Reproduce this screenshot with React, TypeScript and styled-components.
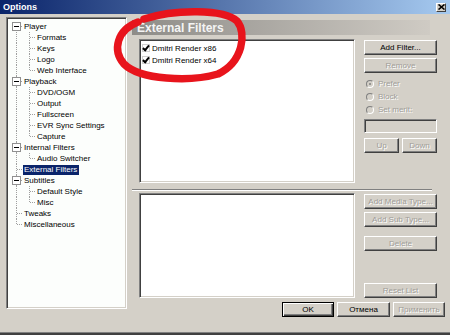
import styled, { createGlobalStyle, css } from 'styled-components';

const GlobalStyle = createGlobalStyle`
  html, body { margin: 0; padding: 0; background: #d4d0c8; }
  body { font-family: "Liberation Sans", Arial, sans-serif; font-size: 8px; color: #000; }
`;

type Node = { label: string; children?: string[]; selected?: boolean };

const tree: Node[] = [
  { label: 'Player', children: ['Formats', 'Keys', 'Logo', 'Web Interface'] },
  { label: 'Playback', children: ['DVD/OGM', 'Output', 'Fullscreen', 'EVR Sync Settings', 'Capture'] },
  { label: 'Internal Filters', children: ['Audio Switcher'] },
  { label: 'External Filters', selected: true },
  { label: 'Subtitles', children: ['Default Style', 'Misc'] },
  { label: 'Tweaks' },
  { label: 'Miscellaneous' },
];

const sunken = css`
  box-sizing: border-box;
  border: 1px solid;
  border-color: #808080 #ffffff #ffffff #808080;
  box-shadow: inset 1px 1px 0 #404040, inset -1px -1px 0 #d4d0c8;
`;

const disabledText = css`
  color: #a09d98;
  text-shadow: 1px 1px 0 #ffffff;
`;

export default function App() {
  return (
    <>
      <GlobalStyle />
      <Window>
        <TitleBar>
          <Title>Options</Title>
          <CloseButton>
            <svg width="7" height="6" viewBox="0 0 7 6">
              <path d="M0.5 0.5 L6.5 5.5 M6.5 0.5 L0.5 5.5" stroke="#000" strokeWidth="1.6" />
            </svg>
          </CloseButton>
        </TitleBar>

        <Body>
          <TreePanel>
            {tree.map((node, i) => {
              const first = i === 0;
              const lastRoot = i === tree.length - 1;
              return (
                <div key={node.label}>
                  <TreeRow>
                    <Cell $vert={first ? 'lower' : lastRoot ? 'upper' : 'full'} $horiz>
                      {node.children && <Expander />}
                    </Cell>
                    <Label $selected={node.selected}>{node.label}</Label>
                  </TreeRow>
                  {node.children?.map((child, j) => (
                    <TreeRow key={child}>
                      <Cell $vert={lastRoot ? 'none' : 'full'} />
                      <Cell $vert={j === node.children!.length - 1 ? 'upper' : 'full'} $horiz />
                      <Label>{child}</Label>
                    </TreeRow>
                  ))}
                </div>
              );
            })}
          </TreePanel>

          <RightPane>
            <Header>External Filters</Header>

            <Section $top={4}>
              <ListBox $height={144}>
                <CheckRow>
                  <CheckBox />
                  Dmitri Render x86
                </CheckRow>
                <CheckRow>
                  <CheckBox />
                  Dmitri Render x64
                </CheckRow>
              </ListBox>
              <ButtonColumn>
                <Button>Add Filter...</Button>
                <Button disabled>Remove</Button>
                <RadioGroup>
                  <RadioRow>
                    <Radio $checked />
                    Prefer
                  </RadioRow>
                  <RadioRow>
                    <Radio />
                    Block
                  </RadioRow>
                  <RadioRow>
                    <Radio />
                    Set merit:
                  </RadioRow>
                </RadioGroup>
                <EditBox />
                <ButtonPair>
                  <Button disabled $width={35}>Up</Button>
                  <Button disabled $width={35}>Down</Button>
                </ButtonPair>
              </ButtonColumn>
            </Section>

            <Separator />

            <Section $top={2}>
              <ListBox $height={105} />
              <ButtonColumn>
                <Button disabled>Add Media Type...</Button>
                <Button disabled>Add Sub Type...</Button>
                <Button disabled $gap={9}>Delete</Button>
                <Button disabled $push>Reset List</Button>
              </ButtonColumn>
            </Section>

            <Footer>
              <Button $default $width={52}>OK</Button>
              <Button $width={53}>Отмена</Button>
              <Button disabled $width={52}>Применить</Button>
            </Footer>
          </RightPane>
        </Body>

        <Scribble width="450" height="335" viewBox="0 0 450 335">
          <path
            d="M144 19 C175 9, 224 9, 237 21 C247 33, 243 62, 218 74 C190 82, 140 80, 124 64 C112 50, 117 30, 138 22"
            fill="none"
            stroke="#e8141c"
            strokeWidth="7.5"
            strokeLinecap="round"
          />
        </Scribble>
      </Window>
    </>
  );
}

const Window = styled.div`
  position: relative;
  box-sizing: border-box;
  width: 450px;
  height: 335px;
  display: flex;
  flex-direction: column;
  background: #d4d0c8;
  border-bottom: 2px solid;
  border-bottom-color: #404040;
  box-shadow: inset 0 -1px 0 #808080;
  overflow: hidden;
`;

const TitleBar = styled.div`
  height: 14px;
  flex-shrink: 0;
  display: flex;
  align-items: center;
  justify-content: space-between;
  padding: 0 4px 0 3px;
  background: linear-gradient(to right, #0a246a, #a6caf0);
`;

const Title = styled.span`
  color: #ffffff;
  font-weight: bold;
  font-size: 9px;
`;

const CloseButton = styled.span`
  box-sizing: border-box;
  width: 10px;
  height: 9px;
  display: flex;
  align-items: center;
  justify-content: center;
  background: #d4d0c8;
  border: 1px solid;
  border-color: #ffffff #404040 #404040 #ffffff;
`;

const Body = styled.div`
  flex: 1;
  display: flex;
  padding: 3px 5px 0 6px;
`;

const TreePanel = styled.div`
  ${sunken};
  width: 121px;
  height: 292px;
  flex-shrink: 0;
  background: #fcfefc;
  padding: 3px 0 0 3px;
`;

const TreeRow = styled.div`
  display: flex;
  align-items: center;
  height: 11px;
`;

const dotsV = 'linear-gradient(to bottom, #a0a0a0 50%, transparent 50%)';

const Cell = styled.span<{ $vert?: 'full' | 'upper' | 'lower' | 'none'; $horiz?: boolean }>`
  position: relative;
  width: 13px;
  height: 11px;
  flex-shrink: 0;
  &::before {
    content: '';
    position: absolute;
    left: 6px;
    width: 1px;
    display: ${(p) => (p.$vert === 'none' || !p.$vert ? 'none' : 'block')};
    top: ${(p) => (p.$vert === 'lower' ? '5px' : '0')};
    height: ${(p) => (p.$vert === 'full' ? '11px' : '6px')};
    background-image: ${dotsV};
    background-size: 1px 2px;
  }
  &::after {
    content: '';
    position: absolute;
    display: ${(p) => (p.$horiz ? 'block' : 'none')};
    left: 7px;
    top: 5px;
    width: 6px;
    height: 1px;
    background-image: linear-gradient(to right, #a0a0a0 50%, transparent 50%);
    background-size: 2px 1px;
  }
`;

const Expander = styled.span`
  position: absolute;
  z-index: 1;
  box-sizing: border-box;
  left: 2px;
  top: 1px;
  width: 9px;
  height: 9px;
  border: 1px solid #909090;
  background: #ffffff;
  &::after {
    content: '';
    position: absolute;
    left: 1px;
    top: 3px;
    width: 5px;
    height: 1px;
    background: #000;
  }
`;

const Label = styled.span<{ $selected?: boolean }>`
  padding: 0 2px 0 1px;
  line-height: 10px;
  white-space: nowrap;
  ${(p) =>
    p.$selected &&
    css`
      background: #0a246a;
      color: #ffffff;
    `}
`;

const RightPane = styled.div`
  flex: 1;
  display: flex;
  flex-direction: column;
  margin-left: 5px;
  padding-top: 3px;
`;

const Header = styled.div`
  box-sizing: border-box;
  width: 298px;
  height: 15px;
  padding-left: 5px;
  display: flex;
  align-items: center;
  background: linear-gradient(to right, #8e8c88, #cfcbc4);
  color: #f4f4f4;
  font-size: 12px;
  font-weight: bold;
`;

const Section = styled.div<{ $top: number }>`
  display: flex;
  margin-top: ${(p) => p.$top}px;
  padding-left: 7px;
`;

const ListBox = styled.div<{ $height: number }>`
  ${sunken};
  width: 216px;
  height: ${(p) => p.$height}px;
  background: #ffffff;
  padding: 2px 0 0 2px;
`;

const CheckRow = styled.div`
  display: flex;
  align-items: center;
  gap: 2px;
  height: 12px;
  font-size: 8px;
`;

const CheckBox = styled.span`
  position: relative;
  box-sizing: border-box;
  width: 8px;
  height: 8px;
  background: #ffffff;
  border: 1px solid #d0d0d0;
  &::after {
    content: '';
    position: absolute;
    left: 1px;
    top: -1px;
    width: 2px;
    height: 5px;
    border: solid #000;
    border-width: 0 2px 2px 0;
    transform: rotate(40deg);
  }
`;

const ButtonColumn = styled.div`
  display: flex;
  flex-direction: column;
  gap: 3px;
  margin-left: 9px;
  padding-top: 1px;
  width: 73px;
`;

const Button = styled.button<{ $width?: number; $default?: boolean; $gap?: number; $push?: boolean }>`
  box-sizing: border-box;
  width: ${(p) => p.$width ?? 73}px;
  height: 15px;
  flex-shrink: 0;
  padding: 0;
  font-family: inherit;
  font-size: 8px;
  color: #000;
  background: #d4d0c8;
  border: 1px solid;
  border-color: #ffffff #404040 #404040 #ffffff;
  box-shadow: inset -1px -1px 0 #808080;
  ${(p) => p.$gap && css`margin-top: ${p.$gap - 3}px;`}
  ${(p) => p.$push && css`margin-top: auto;`}
  &:disabled {
    ${disabledText};
  }
  ${(p) =>
    p.$default &&
    css`
      border: 1px solid #000;
      box-shadow: inset 1px 1px 0 #ffffff, inset -1px -1px 0 #404040, inset -2px -2px 0 #808080;
    `}
`;

const RadioGroup = styled.div`
  display: flex;
  flex-direction: column;
  margin-top: 1px;
`;

const RadioRow = styled.div`
  display: flex;
  align-items: center;
  gap: 4px;
  height: 13px;
  padding-left: 2px;
  ${disabledText};
`;

const Radio = styled.span<{ $checked?: boolean }>`
  position: relative;
  box-sizing: border-box;
  width: 8px;
  height: 8px;
  border-radius: 50%;
  border: 1px solid;
  border-color: #808080 #ffffff #ffffff #808080;
  background: #d4d0c8;
  &::after {
    content: '';
    display: ${(p) => (p.$checked ? 'block' : 'none')};
    position: absolute;
    left: 2px;
    top: 2px;
    width: 2px;
    height: 2px;
    border-radius: 50%;
    background: #808080;
  }
`;

const EditBox = styled.div`
  ${sunken};
  height: 14px;
  background: #d4d0c8;
`;

const ButtonPair = styled.div`
  display: flex;
  justify-content: space-between;
  margin-top: 2px;
`;

const Separator = styled.div`
  width: 300px;
  height: 2px;
  margin-top: 6px;
  border-top: 1px solid #808080;
  border-bottom: 1px solid #ffffff;
  box-sizing: border-box;
`;

const Footer = styled.div`
  display: flex;
  justify-content: flex-end;
  gap: 3px;
  margin-top: 4px;
`;

const Scribble = styled.svg`
  position: absolute;
  left: 0;
  top: 0;
  pointer-events: none;
  filter: blur(0.4px);
`;
